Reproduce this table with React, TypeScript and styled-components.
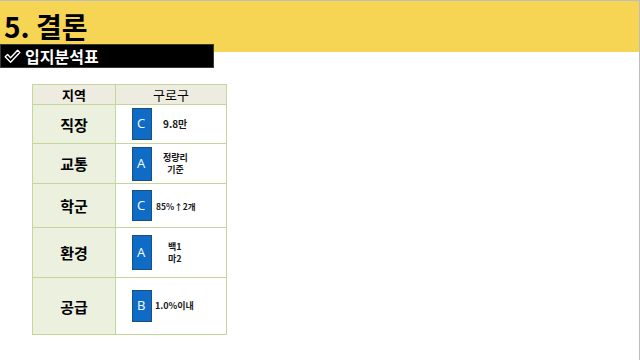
import React from "react";
import styled, { createGlobalStyle } from "styled-components";

const GlobalStyle = createGlobalStyle`
  html, body {
    margin: 0;
    padding: 0;
    background: #ffffff;
  }
  body {
    font-family: "Noto Sans CJK KR", "Noto Sans", sans-serif;
  }
`;

const Slide = styled.div`
  width: 640px;
  height: 360px;
  box-sizing: border-box;
  border-top: 1px solid #bdbdbd;
  border-right: 1px solid #bdbdbd;
  overflow: hidden;
  background: #ffffff;
`;

const TitleBand = styled.div`
  height: 51px;
  background: #f7d554;
  padding: 9px 0 0 4px;
  box-sizing: border-box;
`;

const Title = styled.h1`
  margin: 0;
  font-size: 28px;
  font-weight: 700;
  line-height: 32px;
  color: #000000;
`;

const SubBar = styled.div`
  position: relative;
  margin-top: -8px;
  width: 214px;
  height: 24px;
  box-sizing: border-box;
  background: #000000;
  border: 1px solid #3a3a3a;
  display: flex;
  align-items: center;
  gap: 4px;
  padding-left: 3px;
  color: #ffffff;
  font-size: 16px;
  font-weight: 700;
  line-height: 20px;
`;

const Check = () => (
  <svg width="17" height="15" viewBox="0 0 17 15">
    <path
      d="M1.2 7.8 L3.6 5.6 L6.6 8.8 L13.6 1.2 L15.8 3.4 L6.6 13.2 Z"
      fill="none"
      stroke="#ffffff"
      strokeWidth="1.4"
      strokeLinejoin="round"
    />
  </svg>
);

const Table = styled.div`
  margin: 16px 0 0 32px;
  display: grid;
  grid-template-columns: 83px 110px;
  grid-template-rows: 20px 39px 40px 44px 50px 56px;
  width: 193px;
  border: 1px solid #c4d79b;
`;

const Cell = styled.div<{ $head?: boolean; $label?: boolean }>`
  display: flex;
  align-items: center;
  justify-content: ${(p) => (p.$head || p.$label ? "center" : "flex-start")};
  background: ${(p) => (p.$head ? "#eeece1" : p.$label ? "#ebf1de" : "#ffffff")};
  border-bottom: 1px solid #c4d79b;
  border-right: 1px solid #c4d79b;
  font-size: ${(p) => (p.$label ? "15px" : "12.5px")};
  font-weight: ${(p) => (p.$label ? 700 : 400)};
  color: #000000;
  &:nth-child(2n) {
    border-right: none;
  }
  &:nth-last-child(-n + 2) {
    border-bottom: none;
  }
`;

const HeadCell = styled(Cell)`
  font-size: 13px;
  background: #eeece1;
`;

const Value = styled.div`
  display: flex;
  align-items: center;
  padding-left: 16px;
`;

const Badge = styled.div<{ $h: number }>`
  width: 20px;
  height: ${(p) => p.$h}px;
  box-sizing: border-box;
  background: #0e6cc6;
  border: 1px solid #1d4f7e;
  color: #ffffff;
  font-family: "Open Sans", "Noto Sans", sans-serif;
  font-size: 13px;
  display: flex;
  align-items: center;
  padding: 0 0 2px 4px;
`;

const Note = styled.div<{ $size: number; $gap: number }>`
  margin-left: ${(p) => p.$gap}px;
  font-size: ${(p) => p.$size}px;
  font-weight: 700;
  line-height: 12px;
  color: #1a1a1a;
  text-align: center;
  white-space: nowrap;
`;

const rows = [
  { label: "직장", grade: "C", h: 32, note: ["9.8만"], size: 10, gap: 11 },
  { label: "교통", grade: "A", h: 34, note: ["정량리", "기준"], size: 9, gap: 11 },
  { label: "학군", grade: "C", h: 31, note: ["85%↑2개"], size: 8.5, gap: 4 },
  { label: "환경", grade: "A", h: 35, note: ["백1", "마2"], size: 9, gap: 16 },
  { label: "공급", grade: "B", h: 32, note: ["1.0%이내"], size: 9, gap: 3 },
];

const App = () => (
  <Slide>
    <GlobalStyle />
    <TitleBand>
      <Title>5. 결론</Title>
    </TitleBand>
    <SubBar>
      <Check />
      <span>입지분석표</span>
    </SubBar>
    <Table>
      <HeadCell $head $label>
        지역
      </HeadCell>
      <HeadCell $head>구로구</HeadCell>
      {rows.map((r) => (
        <React.Fragment key={r.label}>
          <Cell $label>{r.label}</Cell>
          <Cell>
            <Value>
              <Badge $h={r.h}>{r.grade}</Badge>
              <Note $size={r.size} $gap={r.gap}>
                {r.note.map((n) => (
                  <div key={n}>{n}</div>
                ))}
              </Note>
            </Value>
          </Cell>
        </React.Fragment>
      ))}
    </Table>
  </Slide>
);

export default App;
